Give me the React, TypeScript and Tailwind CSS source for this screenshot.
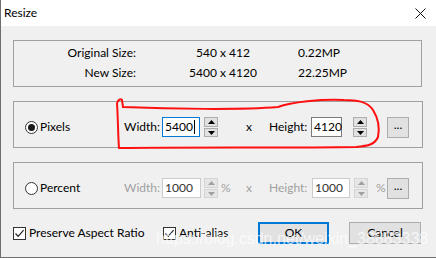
const font = { fontFamily: 'Lato, "Open Sans", sans-serif' }

function Radio({ checked }: { checked?: boolean }) {
  return (
    <span className="flex h-[13px] w-[13px] items-center justify-center rounded-full border border-[#333333] bg-white">
      {checked ? <span className="h-[7px] w-[7px] rounded-full bg-[#1a1a1a]" /> : null}
    </span>
  )
}

function Check() {
  return (
    <span className="flex h-[13px] w-[13px] items-center justify-center border border-[#333333] bg-white">
      <svg width="11" height="11" viewBox="0 0 11 11">
        <path d="M1.5 5.5 L4.2 8.3 L9.6 2.2" fill="none" stroke="#222" strokeWidth="1.2" />
      </svg>
    </span>
  )
}

function Spinner({ disabled }: { disabled?: boolean }) {
  const box = disabled
    ? 'border-[#d5d5d5] bg-[#e6e6e6]'
    : 'border-[#adadad] bg-[#e1e1e1]'
  const fill = disabled ? '#a0a0a0' : '#000'
  return (
    <div className="flex h-[20px] w-[14px] flex-col justify-between">
      <div className={`flex h-[10px] items-center justify-center border ${box}`}>
        <svg width="7" height="4" viewBox="0 0 7 4">
          <path d="M0 4 L3.5 0 L7 4 Z" fill={fill} />
        </svg>
      </div>
      <div className={`flex h-[9px] items-center justify-center border ${box}`}>
        <svg width="7" height="4" viewBox="0 0 7 4">
          <path d="M0 0 L3.5 4 L7 0 Z" fill={fill} />
        </svg>
      </div>
    </div>
  )
}

function Dots() {
  return (
    <div className="flex h-[21px] w-[22px] items-center justify-center border border-[#adadad] bg-[#e1e1e1] pb-[4px] text-[12px] text-black">
      ...
    </div>
  )
}

export default function App() {
  return (
    <div
      className="relative h-[258px] w-[436px] overflow-hidden border-b border-l border-[#6f6f6f] bg-[#f0f0f0] text-[12px] leading-[16px] text-black"
      style={font}
    >
      <div className="flex h-[26px] items-center justify-between bg-white pl-[3px] pr-[10px]">
        <span className="text-[12px]">Resize</span>
        <svg width="11" height="11" viewBox="0 0 11 11">
          <path d="M0.5 0.5 L10.5 10.5 M10.5 0.5 L0.5 10.5" stroke="#111" strokeWidth="1" />
        </svg>
      </div>

      <div className="flex flex-col pl-[12px] pt-[14px]">
        {/* info */}
        <div className="flex h-[47px] w-[409px] flex-col gap-[4px] border border-[#a0a0a0] pt-[4px]">
          <div className="flex">
            <span className="w-[122px] text-right">Original Size:</span>
            <span className="ml-[37px] w-[100px] text-center">540 x 412</span>
            <span className="ml-[25px]">0.22MP</span>
          </div>
          <div className="flex">
            <span className="w-[122px] text-right">New Size:</span>
            <span className="ml-[37px] w-[100px] text-center">5400 x 4120</span>
            <span className="ml-[25px]">22.25MP</span>
          </div>
        </div>

        {/* pixels */}
        <div className="mt-[14px] h-[47px] w-[410px] border border-[#a0a0a0] pt-[15px]">
          <div className="flex h-[20px] items-center">
            <div className="flex w-[110px] items-center pl-[11px]">
              <Radio checked />
              <span className="ml-[2px]">Pixels</span>
            </div>
            <span className="w-[38px]">Width:</span>
            <div className="flex h-[20px] w-[38px] items-center border border-[#0078d7] bg-white pl-[2px]">
              5400
              <span className="ml-[1px] h-[14px] w-[1px] bg-black" />
            </div>
            <div className="ml-[4px]">
              <Spinner />
            </div>
            <span className="ml-[28px] w-[23px]">x</span>
            <span className="w-[42px]">Height:</span>
            <div className="flex h-[20px] w-[31px] items-center border border-[#7a7a7a] bg-white pl-[2px]">4120</div>
            <div className="ml-[11px]">
              <Spinner />
            </div>
            <div className="ml-[20px]">
              <Dots />
            </div>
          </div>
        </div>

        {/* percent */}
        <div className="mt-[14px] h-[47px] w-[410px] border border-[#a0a0a0] pt-[15px]">
          <div className="flex h-[20px] items-center">
            <div className="flex w-[110px] items-center pl-[11px]">
              <Radio />
              <span className="ml-[2px]">Percent</span>
            </div>
            <span className="w-[38px] text-[#a0a0a0]">Width:</span>
            <div className="flex h-[20px] w-[39px] items-center border border-[#cccccc] bg-white pl-[2px] text-[#333]">1000</div>
            <div className="ml-[3px]">
              <Spinner disabled />
            </div>
            <span className="ml-[3px] w-[25px] text-[#a0a0a0]">%</span>
            <span className="w-[23px] text-[#a0a0a0]">x</span>
            <span className="w-[43px] text-[#a0a0a0]">Height:</span>
            <div className="flex h-[20px] w-[38px] items-center border border-[#cccccc] bg-white pl-[2px] text-[#333]">1000</div>
            <div className="ml-[4px]">
              <Spinner disabled />
            </div>
            <span className="ml-[8px] w-[11px] text-[#a0a0a0]">%</span>
            <Dots />
          </div>
        </div>

        {/* bottom */}
        <div className="mt-[13px] flex h-[22px] items-center">
          <div className="flex w-[150px] items-center">
            <Check />
            <span className="ml-[3px]">Preserve Aspect Ratio</span>
          </div>
          <div className="flex w-[95px] items-center">
            <Check />
            <span className="ml-[3px]">Anti-alias</span>
          </div>
          <button className="flex h-[22px] w-[71px] items-center justify-center border-2 border-[#0078d7] bg-[#e1e1e1] text-[12px]">
            OK
          </button>
          <button className="ml-[20px] flex h-[22px] w-[72px] items-center justify-center border border-[#adadad] bg-[#e1e1e1] text-[12px]">
            Cancel
          </button>
        </div>
      </div>

      {/* red hand annotation */}
      <svg className="pointer-events-none absolute left-0 top-0" width="436" height="258" viewBox="0 0 436 258">
        <path
          d="M116 103 C117 100 120 98 121 100 L122 107 C170 109 240 110 277 107 C290 102 320 99 343 100 C355 100 366 101 372 110 C377 118 379 127 377 137 C374 144 368 146 355 147 C300 148 180 147 118 148 C117 135 117 118 116 103"
          fill="none"
          stroke="#ff1010"
          strokeWidth="2"
        />
      </svg>

      {/* watermark */}
      <span
        className="pointer-events-none absolute left-[155px] top-[230px] text-[16px] leading-[18px] text-white/70"
        style={{ fontFamily: '"Liberation Sans", Arial, sans-serif' }}
      >
        https://blog.csdn.net/weixin_38883338
      </span>
    </div>
  )
}
